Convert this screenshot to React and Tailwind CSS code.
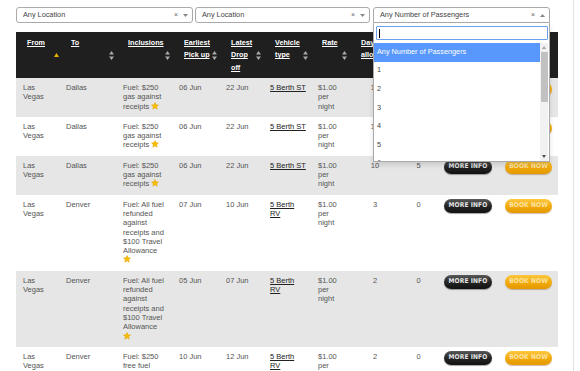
import React from 'react';

const cols = 'grid grid-cols-[44px_57px_56px_47px_44px_47px_39px_50px_35px_59px_64px]';

const Star = () => (
  <svg width="8" height="8" viewBox="0 0 24 24" className="inline-block align-[-1px]">
    <path
      d="M12 1.5l3.1 6.9 7.4.7-5.6 5 1.7 7.4L12 17.6 5.4 21.5l1.7-7.4-5.6-5 7.4-.7z"
      fill="#f6c000"
      stroke="#e49b00"
      strokeWidth="1.5"
    />
  </svg>
);

const SortIcon = () => (
  <svg width="5" height="9" viewBox="0 0 5 9">
    <path d="M2.5 0L5 3.6H0Z M2.5 9L0 5.4H5Z" fill="#a8a8a8" />
  </svg>
);

const SortAsc = () => (
  <svg width="5" height="4" viewBox="0 0 5 4">
    <path d="M2.5 0L5 4H0Z" fill="#e7b400" />
  </svg>
);

const Caret = ({ up }) => (
  <svg width="5" height="3" viewBox="0 0 5 3">
    <path d={up ? 'M2.5 0L5 3H0Z' : 'M0 0H5L2.5 3Z'} fill="#888" />
  </svg>
);

const Select = ({ label, width, open }) => (
  <div
    className={`h-[16px] ${width} border border-[#aaa] ${open ? 'rounded-t-[3px]' : 'rounded-[3px]'} bg-white flex items-center pl-[6px] pr-[4px] text-[#444] text-[7.3px]`}
  >
    <span className="flex-1 whitespace-nowrap">{label}</span>
    <span className="text-[#666] text-[7px] mr-[5px]">×</span>
    <Caret up={open} />
  </div>
);

const headers = [
  { lines: ['From'], asc: true },
  { lines: ['To'] },
  { lines: ['Inclusions'] },
  { lines: ['Earliest', 'Pick up'] },
  { lines: ['Latest', 'Drop', 'off'] },
  { lines: ['Vehicle', 'type'] },
  { lines: ['Rate'] },
  { lines: ['Days', 'allowed'] },
  { lines: ['Extra', 'days'] },
  { lines: [], none: true },
  { lines: [], none: true },
];

const dallas = {
  to: 'Dallas',
  inc: ['Fuel: $250', 'gas against', <>receipts <Star /></>],
  veh: ['5 Berth ST'],
  days: '10',
  extra: '5',
};

const denverInc = ['Fuel: All fuel', 'refunded', 'against', 'receipts and', '$100 Travel', 'Allowance', <Star />];

const rows = [
  { ...dallas, pick: '06 Jun', drop: '22 Jun' },
  { ...dallas, pick: '06 Jun', drop: '22 Jun' },
  { ...dallas, pick: '06 Jun', drop: '22 Jun' },
  { to: 'Denver', inc: denverInc, pick: '07 Jun', drop: '10 Jun', veh: ['5 Berth', 'RV'], days: '3', extra: '0' },
  { to: 'Denver', inc: denverInc, pick: '05 Jun', drop: '07 Jun', veh: ['5 Berth', 'RV'], days: '2', extra: '0' },
  {
    to: 'Denver',
    inc: ['Fuel: $250', 'free fuel', 'against', 'receipts', <Star />],
    pick: '10 Jun',
    drop: '12 Jun',
    veh: ['5 Berth', 'RV'],
    days: '2',
    extra: '0',
  },
];

const Lines = ({ lines, className = '' }) => (
  <div className={`pt-[5px] pb-[6px] ${className}`}>
    {lines.map((l, j) => (
      <div key={j} className="whitespace-nowrap">
        {l}
      </div>
    ))}
  </div>
);

const Dropdown = () => (
  <div className="absolute left-0 top-[16px] z-10 w-[177px] h-[139px] bg-white border border-t-0 border-[#aaa] flex flex-col shadow-[0_3px_5px_rgba(0,0,0,0.12)]">
    <div className="mt-[3px] ml-[2px] mr-[1px] h-[14px] border border-[#6c9ef0] rounded-[1px] flex items-center pl-[2px]">
      <div className="w-px h-[9px] bg-black" />
    </div>
    <div className="mt-[3px] flex-1 min-h-0 flex mr-px">
      <div className="flex-1 overflow-hidden text-[7.3px] text-[#444]">
        <div className="h-[18.6px] bg-[#5897fb] text-white flex items-center pl-[3px] whitespace-nowrap">
          Any Number of Passengers
        </div>
        {['1', '2', '3', '4', '5', '6'].map((n) => (
          <div key={n} className="h-[18.6px] flex items-center pl-[3px]">
            {n}
          </div>
        ))}
      </div>
      <div className="w-[8px] bg-[#f1f1f1] flex flex-col items-center">
        <div className="h-[9px] flex items-center">
          <svg width="4" height="3" viewBox="0 0 4 3">
            <path d="M2 0L4 3H0Z" fill="#a3a3a3" />
          </svg>
        </div>
        <div className="w-[7px] h-[50px] bg-[#c1c1c1]" />
        <div className="flex-1" />
        <div className="h-[9px] flex items-center">
          <svg width="4" height="3" viewBox="0 0 4 3">
            <path d="M0 0H4L2 3Z" fill="#505050" />
          </svg>
        </div>
      </div>
    </div>
  </div>
);

const MoreInfo = () => (
  <div className="w-[48px] h-[14px] rounded-full bg-gradient-to-b from-[#5a5a5a] via-[#262626] to-[#111] shadow-[0_1px_1px_rgba(0,0,0,0.35)] flex items-center justify-center text-[#e4e4e4] font-['Liberation_Sans_Narrow','DejaVu_Sans_Condensed',sans-serif] font-bold text-[6.6px] tracking-[0.1px]">
    MORE INFO
  </div>
);

const BookNow = () => (
  <div className="w-[47px] h-[14px] rounded-full bg-gradient-to-b from-[#fcc83c] via-[#f2ab0c] to-[#e39800] shadow-[0_1px_1px_rgba(120,70,0,0.35)] flex items-center justify-center text-[#fde3a0] font-['Liberation_Sans_Narrow','DejaVu_Sans_Condensed',sans-serif] font-bold text-[6.6px] tracking-[0.1px]">
    BOOK NOW
  </div>
);

export default function App() {
  return (
    <div className="w-[580px] h-[371px] overflow-hidden bg-white font-['Liberation_Sans',Arial,sans-serif]">
      <div className="w-[574px] h-full border-r border-[#e2e2e2] pl-4 pt-[7px]">
        <div className="flex">
          <Select label="Any Location" width="w-[177px]" />
          <div className="ml-[2px]">
            <Select label="Any Location" width="w-[175px]" />
          </div>
          <div className="ml-[3px] relative">
            <Select label="Any Number of Passengers" width="w-[177px]" open />
            <Dropdown />
          </div>
        </div>

        <div className="mt-[9px] w-[542px]">
          <div className={`${cols} h-[46px] bg-[#1f1f1f] text-white font-bold text-[7.2px] leading-[12.3px]`}>
            {headers.map((h, i) => (
              <div key={i} className={`flex items-center justify-between pl-[11px] ${i === 0 ? 'pr-px' : 'pr-[3px]'}`}>
                <div className="self-start pt-[5px]">
                  {h.lines.map((l) => (
                    <div key={l} className="underline underline-offset-1 whitespace-nowrap">
                      {l}
                    </div>
                  ))}
                </div>
                {!h.none && (h.asc ? <SortAsc /> : <SortIcon />)}
              </div>
            ))}
          </div>

          {rows.map((r, i) => (
            <div
              key={i}
              className={`${cols} ${i % 2 === 0 ? 'bg-[#e6e6e6]' : 'bg-white'} text-[7.5px] leading-[9.3px] text-[#555]`}
            >
              <Lines lines={['Las', 'Vegas']} className="pl-[7px]" />
              <Lines lines={[r.to]} className="pl-[6px]" />
              <Lines lines={r.inc} className="pl-[6px]" />
              <Lines lines={[r.pick]} className="pl-[6px]" />
              <Lines lines={[r.drop]} className="pl-[6px]" />
              <Lines lines={r.veh} className="pl-[6px] text-[#222] underline" />
              <Lines lines={['$1.00', 'per', 'night']} className="pl-[7px]" />
              <Lines lines={[r.days]} className="text-center" />
              <Lines lines={[r.extra]} className="text-center pl-[2px]" />
              <div className="pt-[4px] pl-[9px]">
                <MoreInfo />
              </div>
              <div className="pt-[4px] pl-[11px]">
                <BookNow />
              </div>
            </div>
          ))}
        </div>
      </div>
    </div>
  );
}
